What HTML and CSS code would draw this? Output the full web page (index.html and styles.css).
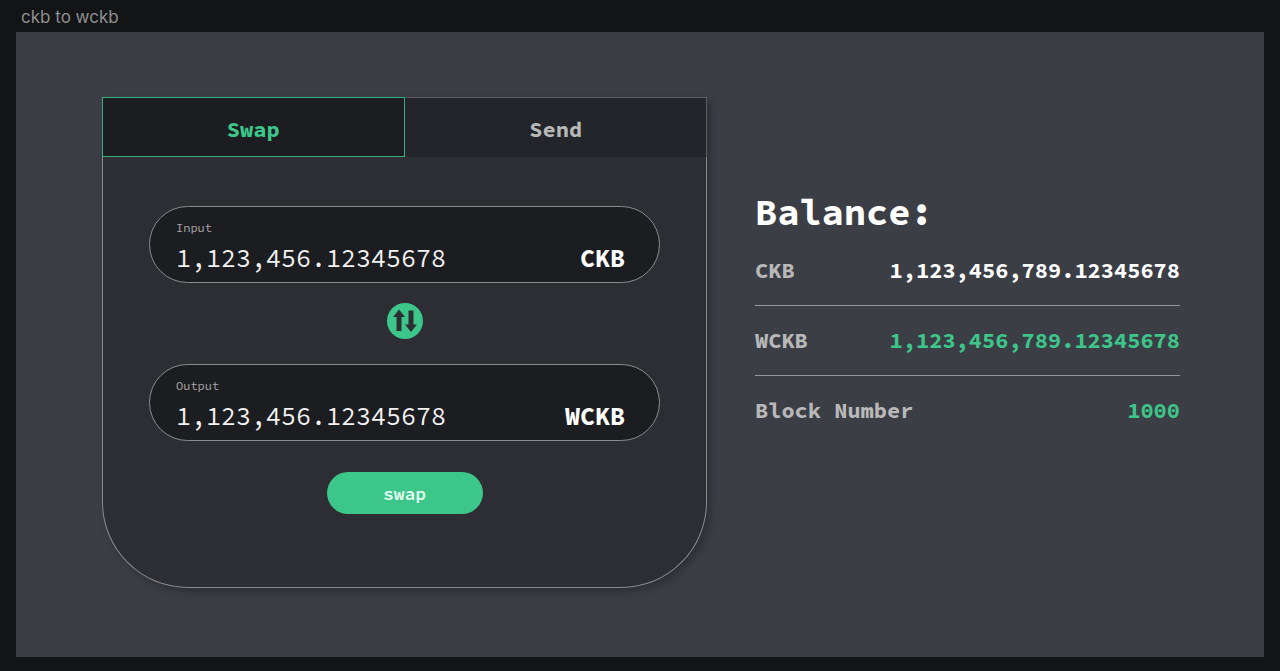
FILE: index.html
```html
<!DOCTYPE html>
<html lang="en">
<head>
  <meta charset="utf-8">
  <meta name="viewport" content="width=device-width, initial-scale=1">
  <title>ckb to wckb</title>
  <link rel="stylesheet" href="styles.css">
</head>
<body>
  <h1 class="page-title">ckb to wckb</h1>
  <main class="board">
    <section class="card">
      <div class="tabs" role="tablist">
        <button class="tab tab-active" type="button" role="tab" aria-selected="true">Swap</button>
        <button class="tab" type="button" role="tab" aria-selected="false">Send</button>
      </div>
      <form class="swap-form">
        <div class="field">
          <label class="field-label" for="amount-in">Input</label>
          <div class="field-row">
            <input class="field-value" id="amount-in" type="text" value="1,123,456.12345678">
            <span class="field-unit">CKB</span>
          </div>
        </div>
        <button class="flip" type="button" aria-label="Switch direction">
          <svg class="flip-icon" viewBox="0 0 36 36" aria-hidden="true">
            <circle cx="18" cy="18" r="18" fill="#3cc68a"/>
            <path d="M12 6.500L18 14H14.500V28H9.500V14H6Z" fill="#2d2e33"/>
            <path d="M24 29L18 21.500H21.500V7.500H26.500V21.500H30Z" fill="#2d2e33"/>
          </svg>
        </button>
        <div class="field">
          <label class="field-label" for="amount-out">Output</label>
          <div class="field-row">
            <input class="field-value" id="amount-out" type="text" value="1,123,456.12345678">
            <span class="field-unit">WCKB</span>
          </div>
        </div>
        <button class="submit" type="button">swap</button>
      </form>
    </section>
    <section class="balance">
      <h2 class="balance-title">Balance:</h2>
      <dl class="balance-list">
        <div class="balance-row">
          <dt>CKB</dt>
          <dd>1,123,456,789.12345678</dd>
        </div>
        <div class="balance-row">
          <dt>WCKB</dt>
          <dd class="accent">1,123,456,789.12345678</dd>
        </div>
        <div class="balance-row">
          <dt>Block Number</dt>
          <dd class="accent">1000</dd>
        </div>
      </dl>
    </section>
  </main>
</body>
</html>
```
FILE: styles.css
```css
* {
  box-sizing: border-box;
}

body {
  margin: 0;
  min-height: 100vh;
  padding: 0 16px 14px;
  display: flex;
  flex-direction: column;
  background: #121416;
  color: #fff;
  font-family: "Source Code Pro", "Liberation Mono", monospace;
}

button,
input {
  margin: 0;
  padding: 0;
  border: 0;
  background: none;
  color: inherit;
  font: inherit;
}

button {
  cursor: pointer;
}

.page-title {
  margin: 0;
  padding: 2px 5px 0;
  color: #8f9092;
  font: 400 17px/30px Inter, sans-serif;
}

.board {
  flex: 1;
  display: flex;
  align-items: flex-start;
  gap: 48px;
  padding: 65px 84px 69px 86px;
  background: #3c3e46;
}

.card {
  flex: 603 1 0;
  min-width: 0;
  border: 1px solid #8b8b8d;
  border-top-color: #5f5f61;
  border-radius: 0 0 86px 86px;
  background: #2d2e33;
  box-shadow: 4px 4px 8px rgba(0, 0, 0, 0.25);
}

.tabs {
  display: grid;
  grid-template-columns: 1fr 1fr;
  margin: -1px -1px 0;
}

.tab {
  height: 60px;
  padding-top: 4px;
  border: 1px solid #5f5f61;
  border-left-color: #24252a;
  border-bottom-color: #24252a;
  background: #24252a;
  color: #b8b8b8;
  font-size: 22px;
  font-weight: 700;
  line-height: 32px;
}

.tab-active {
  border-color: #3bae7d;
  background: #1c1d20;
  color: #3cc68a;
}

.swap-form {
  display: flex;
  flex-direction: column;
  align-items: center;
  padding: 49px 46px 73px;
}

.field {
  width: 100%;
  height: 77px;
  padding: 11px 34px 0 26px;
  border: 1px solid #8b8b8d;
  border-radius: 39px;
  background: #1c1d21;
}

.field-label {
  display: block;
  color: #a6a6a6;
  font-size: 12px;
  line-height: 20px;
}

.field-row {
  display: flex;
  align-items: center;
  line-height: 40px;
}

.field-value {
  flex: 1;
  min-width: 0;
  height: 40px;
  color: #f2f2f2;
  font-size: 25px;
}

.field-unit {
  font-size: 25px;
  font-weight: 700;
}

.flip {
  width: 36px;
  height: 36px;
  margin: 20px 0 25px;
}

.flip-icon {
  display: block;
}

.submit {
  width: 156px;
  height: 42px;
  padding-top: 2px;
  margin-top: 31px;
  border-radius: 21px;
  background: #3cc68a;
  color: #e6fff4;
  font-size: 18px;
  font-weight: 600;
  line-height: 40px;
}

.balance {
  flex: 425 1 0;
  min-width: 0;
  padding-top: 90px;
}

.balance-title {
  margin: 0;
  font-size: 37px;
  font-weight: 700;
  line-height: 50px;
}

.balance-list {
  margin: 0;
}

.balance-row {
  display: flex;
  justify-content: space-between;
  height: 70px;
  padding-top: 18px;
  font-size: 22px;
  font-weight: 700;
  line-height: 32px;
}

.balance-row:first-child {
  height: 69px;
  padding-top: 17px;
}

.balance-row:not(:last-child) {
  border-bottom: 1px solid #96979a;
}

.balance-row dt {
  color: #b8b8b8;
}

.balance-row dd {
  margin: 0;
}

.balance-row .accent {
  color: #3cc68a;
}
```
